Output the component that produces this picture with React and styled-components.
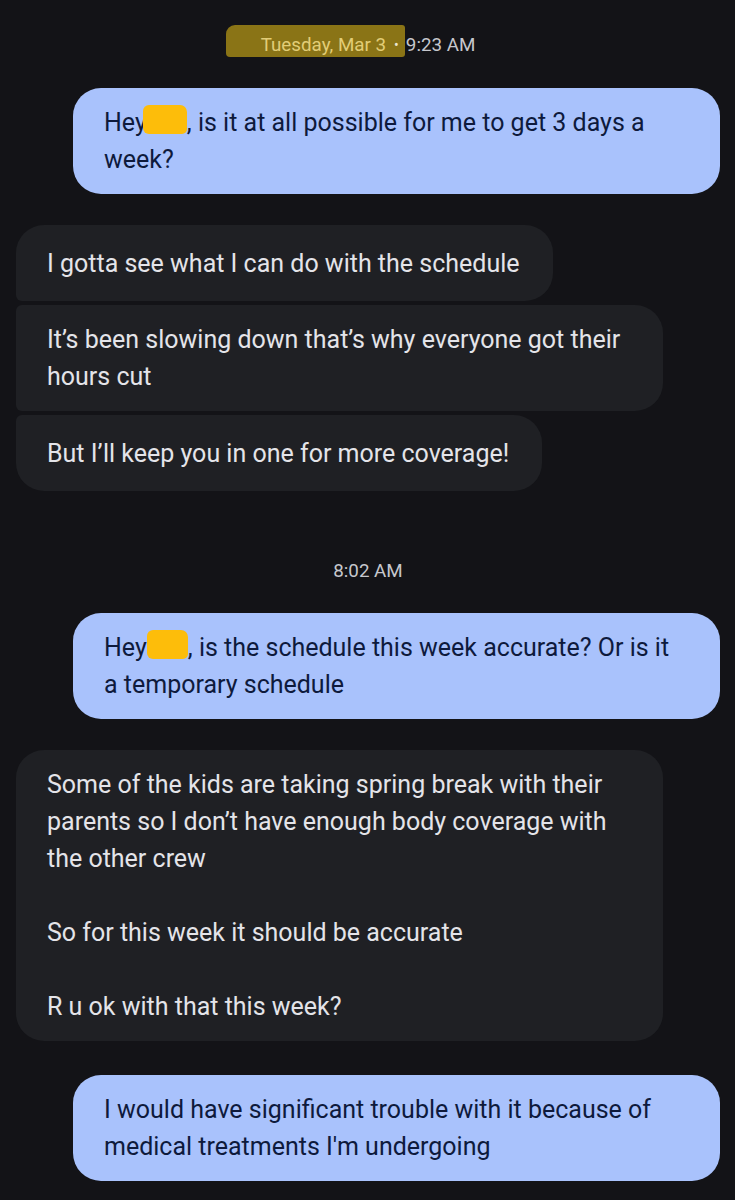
import React from "react";
import styled, { createGlobalStyle, css } from "styled-components";

const GlobalStyle = createGlobalStyle`
  html, body {
    margin: 0;
    padding: 0;
    background: #131317;
  }
  body {
    font-family: Roboto, "Noto Sans", "Liberation Sans", sans-serif;
    -webkit-font-smoothing: antialiased;
  }
`;

const Screen = styled.main`
  box-sizing: border-box;
  width: 735px;
  min-height: 1200px;
  padding: 33px 15px 0 16px;
  background: #131317;
  display: flex;
  flex-direction: column;
  gap: 31px;
`;

const Stamp = styled.div`
  text-align: center;
  font-size: 18.8px;
  line-height: 24px;
  color: #c6c7cd;
  margin-top: ${(p) => p.$push || 0}px;
  margin-bottom: ${(p) => p.$pull || 0}px;
`;

const Highlight = styled.span`
  background: #8a7416;
  color: #e2cd77;
  margin-left: -35px;
  margin-right: -19px;
  padding: 9px 19px 1px 35px;
  border-radius: 9px 3px 3px 4px;
`;

const Dot = styled.span`
  position: relative;
  font-size: 14px;
  vertical-align: 1px;
  margin: 0 7px 0 8px;
  color: #ece6d2;
`;

const Group = styled.section`
  display: flex;
  flex-direction: column;
  align-items: ${(p) => (p.$sent ? "flex-end" : "flex-start")};
  gap: 4px;
  margin-top: ${(p) => p.$push || 0}px;
`;

const radii = {
  single: "28px",
  first: "28px 28px 28px 6px",
  middle: "6px 28px 28px 6px",
  last: "6px 28px 28px 28px",
};

const Bubble = styled.div`
  box-sizing: border-box;
  max-width: 647px;
  min-height: 76px;
  padding: 16px 33px 16px 31px;
  display: flex;
  align-items: center;
  font-size: 25px;
  line-height: 37px;
  white-space: pre-wrap;
  border-radius: ${(p) => radii[p.$pos || "single"]};
  ${(p) =>
    p.$sent
      ? css`
          background: #a9c2fc;
          color: #0e1a3c;
        `
      : css`
          background: #1f2024;
          color: #e4e4e9;
        `}
`;

const Redact = styled.span`
  display: inline-block;
  width: ${(p) => p.$w}px;
  height: 29px;
  margin-left: ${(p) => p.$overlap || 0}px;
  vertical-align: -3px;
  background: #fdbd0a;
  border-radius: 6px 7px 5px 6px;
`;

const Text = styled.span``;

export default function App() {
  return (
    <>
      <GlobalStyle />
      <Screen>
        <Stamp>
          <Highlight>Tuesday, Mar 3</Highlight>
          <Dot>•</Dot>9:23 AM
        </Stamp>

        <Group $sent>
          <Bubble $sent>
            <Text>
              Hey<Redact $w={44} $overlap={-4} />, is it at all possible for me to get 3 days a week?
            </Text>
          </Bubble>
        </Group>

        <Group>
          <Bubble $pos="first">
            <Text>I gotta see what I can do with the schedule</Text>
          </Bubble>
          <Bubble $pos="middle">
            <Text>It’s been slowing down that’s why everyone got their hours cut</Text>
          </Bubble>
          <Bubble $pos="last">
            <Text>But I’ll keep you in one for more coverage!</Text>
          </Bubble>
        </Group>

        <Stamp $push={37} $pull={-1}>8:02 AM</Stamp>

        <Group $sent>
          <Bubble $sent>
            <Text>
              Hey<Redact $w={41} />, is the schedule this week accurate? Or is it a temporary schedule
            </Text>
          </Bubble>
        </Group>

        <Group>
          <Bubble>
            <Text>
              {"Some of the kids are taking spring break with their parents so I don’t have enough body coverage with the other crew\n\nSo for this week it should be accurate\n\nR u ok with that this week?"}
            </Text>
          </Bubble>
        </Group>

        <Group $sent $push={3}>
          <Bubble $sent>
            <Text>I would have significant trouble with it because of medical treatments I'm undergoing</Text>
          </Bubble>
        </Group>
      </Screen>
    </>
  );
}
